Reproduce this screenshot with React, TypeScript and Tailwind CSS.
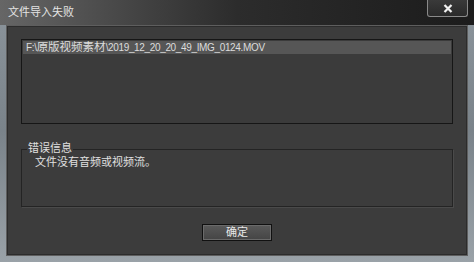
const FONT = "font-['Liberation_Sans','Noto_Sans_CJK_SC',sans-serif]";

// latin runs in the path render narrower than the CJK ones
function Latin({ children }: { children: string }) {
  return <span className="text-[10px] tracking-[-0.35px]">{children}</span>;
}

export default function App() {
  return (
    <div
      className={`relative flex h-[262px] w-[474px] flex-col overflow-hidden bg-gradient-to-b from-[#8c959c] via-[#7a838a] to-[#9aa2a8] ${FONT}`}
    >
      {/* Title bar */}
      <div className="flex h-[25px] shrink-0 items-center bg-gradient-to-r from-[#666] via-[#2c2c2c] to-[#1c1c1c] pl-[8px]">
        <span className="text-[11px] leading-none text-[#e4e4e4]">文件导入失败</span>
      </div>

      {/* Close button */}
      <div className="absolute right-[6px] top-0 flex h-[17px] w-[41px] items-center justify-center rounded-b-[3px] border border-t-0 border-[#8a8a8a] bg-gradient-to-b from-[#3a3a3a] to-[#2a2a2a]">
        <svg width="10" height="9" viewBox="0 0 10 9">
          <path d="M1.5 1 L8.5 8 M8.5 1 L1.5 8" stroke="#f2f2f2" strokeWidth="2.2" />
        </svg>
      </div>

      {/* Content panel */}
      <div className="mx-[6px] mb-[6px] flex flex-1 flex-col border border-[#5e5e5e] bg-[#3c3c3c] px-[14px] pt-[13px] shadow-[inset_0_0_0_1px_#2c2c2c]">
        {/* File list */}
        <div className="h-[85px] border border-[#161616] bg-[#3b3b3b] p-px">
          <div className="flex h-[13px] items-center bg-[#565656] pl-[3px] pt-px">
            <span className="text-[11.5px] leading-none text-[#dcdcdc]">
              <Latin>F:\</Latin>原版视频素材<Latin>\2019_12_20_20_49_IMG_0124.MOV</Latin>
            </span>
          </div>
        </div>

        {/* Error group */}
        <div className="relative mt-[25px] h-[58px] border border-[#242424] shadow-[1px_1px_0_#4a4a4a]">
          <span className="absolute left-[5px] top-[-7px] bg-[#3c3c3c] px-px text-[11px] leading-none text-[#e0e0e0]">
            错误信息
          </span>
          <div className="pl-[13px] pt-[7px] text-[11px] leading-none text-[#e0e0e0]">
            文件没有音频或视频流。
          </div>
        </div>

        {/* OK button */}
        <div className="mt-[17px] flex justify-center">
          <button className="flex h-[17px] w-[70px] items-center justify-center border border-[#111] bg-gradient-to-b from-[#5a5a5a] to-[#444] text-[11px] leading-none text-[#e8e8e8] shadow-[inset_0_0_0_1px_#6a6a6a]">
            确定
          </button>
        </div>
      </div>
    </div>
  );
}
